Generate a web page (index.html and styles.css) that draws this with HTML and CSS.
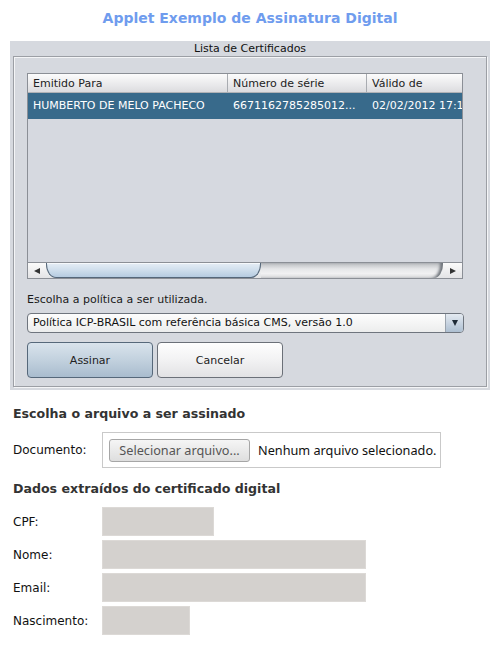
FILE: index.html
```html
<!DOCTYPE html>
<html lang="pt-BR">
<head>
<meta charset="utf-8">
<title>Applet Exemplo de Assinatura Digital</title>
<link rel="stylesheet" href="styles.css">
</head>
<body>
<h1 class="title">Applet Exemplo de Assinatura Digital</h1>

<div class="applet">
  <div class="legend">Lista de Certificados</div>
  <div class="group">
    <div class="table">
      <div class="thead">
        <div class="th c1">Emitido Para</div>
        <div class="th c2">Número de série</div>
        <div class="th c3">Válido de</div>
      </div>
      <div class="row selected">
        <div class="td c1">HUMBERTO DE MELO PACHECO</div>
        <div class="td c2">6671162785285012...</div>
        <div class="td c3">02/02/2012 17:1</div>
      </div>
      <div class="filler"></div>
      <div class="hscroll">
        <div class="sbtn left"><span class="tri-left"></span></div>
        <div class="track">
          <div class="thumb"></div>
          <div class="track-rest"></div>
        </div>
        <div class="sbtn right"><span class="tri-right"></span></div>
      </div>
    </div>

    <div class="policy-label">Escolha a política a ser utilizada.</div>
    <div class="combo">
      <div class="combo-text">Política ICP-BRASIL com referência básica CMS, versão 1.0</div>
      <div class="combo-arrow"><span class="tri-down"></span></div>
    </div>

    <div class="actions">
      <div class="jbtn primary">Assinar</div>
      <div class="jbtn">Cancelar</div>
    </div>
  </div>
</div>

<h2 class="section">Escolha o arquivo a ser assinado</h2>
<div class="file-row">
  <div class="lbl">Documento:</div>
  <div class="file-box">
    <span class="file-btn">Selecionar arquivo...</span>
    <span class="file-text">Nenhum arquivo selecionado.</span>
  </div>
</div>

<h2 class="section second">Dados extraídos do certificado digital</h2>
<div class="fields">
  <div class="lbl">CPF:</div><div class="field w-cpf"></div>
  <div class="lbl">Nome:</div><div class="field w-long"></div>
  <div class="lbl">Email:</div><div class="field w-long"></div>
  <div class="lbl">Nascimento:</div><div class="field w-date"></div>
</div>
</body>
</html>
```

FILE: styles.css
```css
* { box-sizing: border-box; }

body {
  margin: 0;
  width: 500px;
  font-family: "DejaVu Sans", Verdana, sans-serif;
  background: #ffffff;
  color: #222;
}

.title {
  margin: 0;
  padding-top: 10px;
  font-size: 14px;
  line-height: 17px;
  font-weight: bold;
  text-align: center;
  color: #6f9cee;
}

/* ---------- Java applet ---------- */
.applet {
  margin: 14px 10px 0;
  height: 349px;
  background: #d6d9df;
  padding: 0 3px 3px;
  font-size: 11px;
  color: #1a1a1a;
  display: flex;
  flex-direction: column;
}

.legend {
  height: 15px;
  line-height: 15px;
  text-align: center;
  color: #111;
}

.group {
  flex: 1;
  border: 1px solid #9c9fa5;
  box-shadow: inset 1px 1px 0 #f4f5f7, 1px 1px 0 #f4f5f7;
  padding: 16px 13px 0;
  display: flex;
  flex-direction: column;
}

.table {
  width: 436px;
  height: 206px;
  border: 1px solid #8b8f96;
  display: flex;
  flex-direction: column;
  background: #d6d9e0;
  overflow: hidden;
  flex-shrink: 0;
}

.thead {
  display: flex;
  height: 19px;
  background: linear-gradient(#fcfcfc, #e9e9eb 60%, #dcdcdf);
  border-bottom: 1px solid #b0b2b6;
  flex-shrink: 0;
}

.th, .td {
  padding-left: 5px;
  white-space: nowrap;
  overflow: hidden;
}

.th {
  line-height: 19px;
  border-right: 1px solid #a9acb1;
  color: #222;
}

.c1 { width: 200px; flex-shrink: 0; }
.c2 { width: 139px; flex-shrink: 0; }
.c3 { flex: 1; border-right: none; }

.row {
  display: flex;
  height: 26px;
  line-height: 26px;
  flex-shrink: 0;
}

.row.selected {
  background: #386a8b;
  color: #ffffff;
}

.filler { flex: 1; }

.hscroll {
  height: 16px;
  display: flex;
  border-top: 1px solid #8b8f96;
  flex-shrink: 0;
}

.sbtn {
  width: 18px;
  background: linear-gradient(#fbfbfb, #e3e3e5);
  display: flex;
  align-items: center;
  justify-content: center;
}

.sbtn.right { width: 19px; }

.tri-left {
  width: 0; height: 0;
  border-top: 3px solid transparent;
  border-bottom: 3px solid transparent;
  border-right: 6px solid #333;
}

.tri-right {
  width: 0; height: 0;
  border-top: 3px solid transparent;
  border-bottom: 3px solid transparent;
  border-left: 6px solid #333;
}

.track {
  flex: 1;
  display: flex;
  background: linear-gradient(#9da2a8, #d8d9dc 25%, #eeeff0 60%, #e2e3e5);
}

.thumb {
  width: 215px;
  border: 1px solid #55677a;
  border-top: none;
  border-radius: 0 0 10px 10px / 0 0 14px 14px;
  background: linear-gradient(#e6eef6, #cfdeec 50%, #b5cbe0);
  box-shadow: inset 0 1px 0 #f6f9fc;
}

.track-rest {
  flex: 1;
  border-radius: 0 0 9px 0 / 0 0 14px 0;
  background: linear-gradient(#b9bcc0, #e6e7e9 40%, #f1f1f2 70%, #d9dadc);
  box-shadow: inset -4px 0 3px -1px #6f747b;
}

.policy-label {
  margin-top: 14px;
  line-height: 14px;
  color: #1a1a1a;
}

.combo {
  margin-top: 6px;
  width: 437px;
  height: 20px;
  border: 1px solid #6f757e;
  border-radius: 4px;
  display: flex;
  background: linear-gradient(#fdfdfd, #eceded);
  overflow: hidden;
  flex-shrink: 0;
}

.combo-text {
  flex: 1;
  padding-left: 5px;
  line-height: 18px;
  white-space: nowrap;
  overflow: hidden;
  color: #111;
}

.combo-arrow {
  width: 18px;
  border-left: 1px solid #9aa3ad;
  background: linear-gradient(#e4eaf1, #c3d0de 60%, #adbfd1);
  display: flex;
  align-items: center;
  justify-content: center;
}

.tri-down {
  width: 0; height: 0;
  border-left: 3px solid transparent;
  border-right: 3px solid transparent;
  border-top: 6px solid #1e2a36;
}

.actions {
  margin-top: 9px;
  display: flex;
  gap: 4px;
}

.jbtn {
  width: 126px;
  height: 36px;
  border: 1px solid #6b7078;
  border-radius: 4px;
  background: linear-gradient(#fefefe, #f2f2f3 50%, #e2e2e4);
  display: flex;
  align-items: center;
  justify-content: center;
  color: #222;
}

.jbtn.primary {
  border-color: #56687a;
  background: linear-gradient(#d9e3ec, #c2d1de 50%, #a9bcce);
}

/* ---------- HTML form ---------- */
.section {
  margin: 16px 0 0 13px;
  font-size: 12.6px;
  line-height: 16px;
  font-weight: bold;
  color: #333;
}

.section.second { margin-top: 13px; }

.lbl {
  font-size: 12px;
  color: #111;
  display: flex;
  align-items: center;
}

.file-row {
  margin: 10px 0 0 13px;
  display: flex;
}

.file-row .lbl { width: 89px; flex-shrink: 0; }

.file-box {
  width: 339px;
  height: 36px;
  border: 1px solid #c9c9c9;
  padding: 0 6px;
  display: flex;
  align-items: center;
  gap: 8px;
  font-family: "Noto Sans", "Open Sans", sans-serif;
  font-size: 12.7px;
  flex-shrink: 0;
}

.file-btn {
  width: 141px;
  height: 23px;
  flex-shrink: 0;
  border: 1px solid #a6a6a6;
  border-radius: 3px;
  background: linear-gradient(#f5f5f5, #dedede);
  color: #555;
  display: flex;
  align-items: center;
  justify-content: center;
}

.file-text { color: #111; white-space: nowrap; }

.fields {
  margin: 10px 0 0 13px;
  display: grid;
  grid-template-columns: 89px auto;
  row-gap: 4px;
  justify-items: start;
}

.field {
  height: 29px;
  background: #d4d1ce;
  border: 1px solid #dcd9d6;
}

.w-cpf { width: 112px; }
.w-long { width: 264px; }
.w-date { width: 88px; }
```
